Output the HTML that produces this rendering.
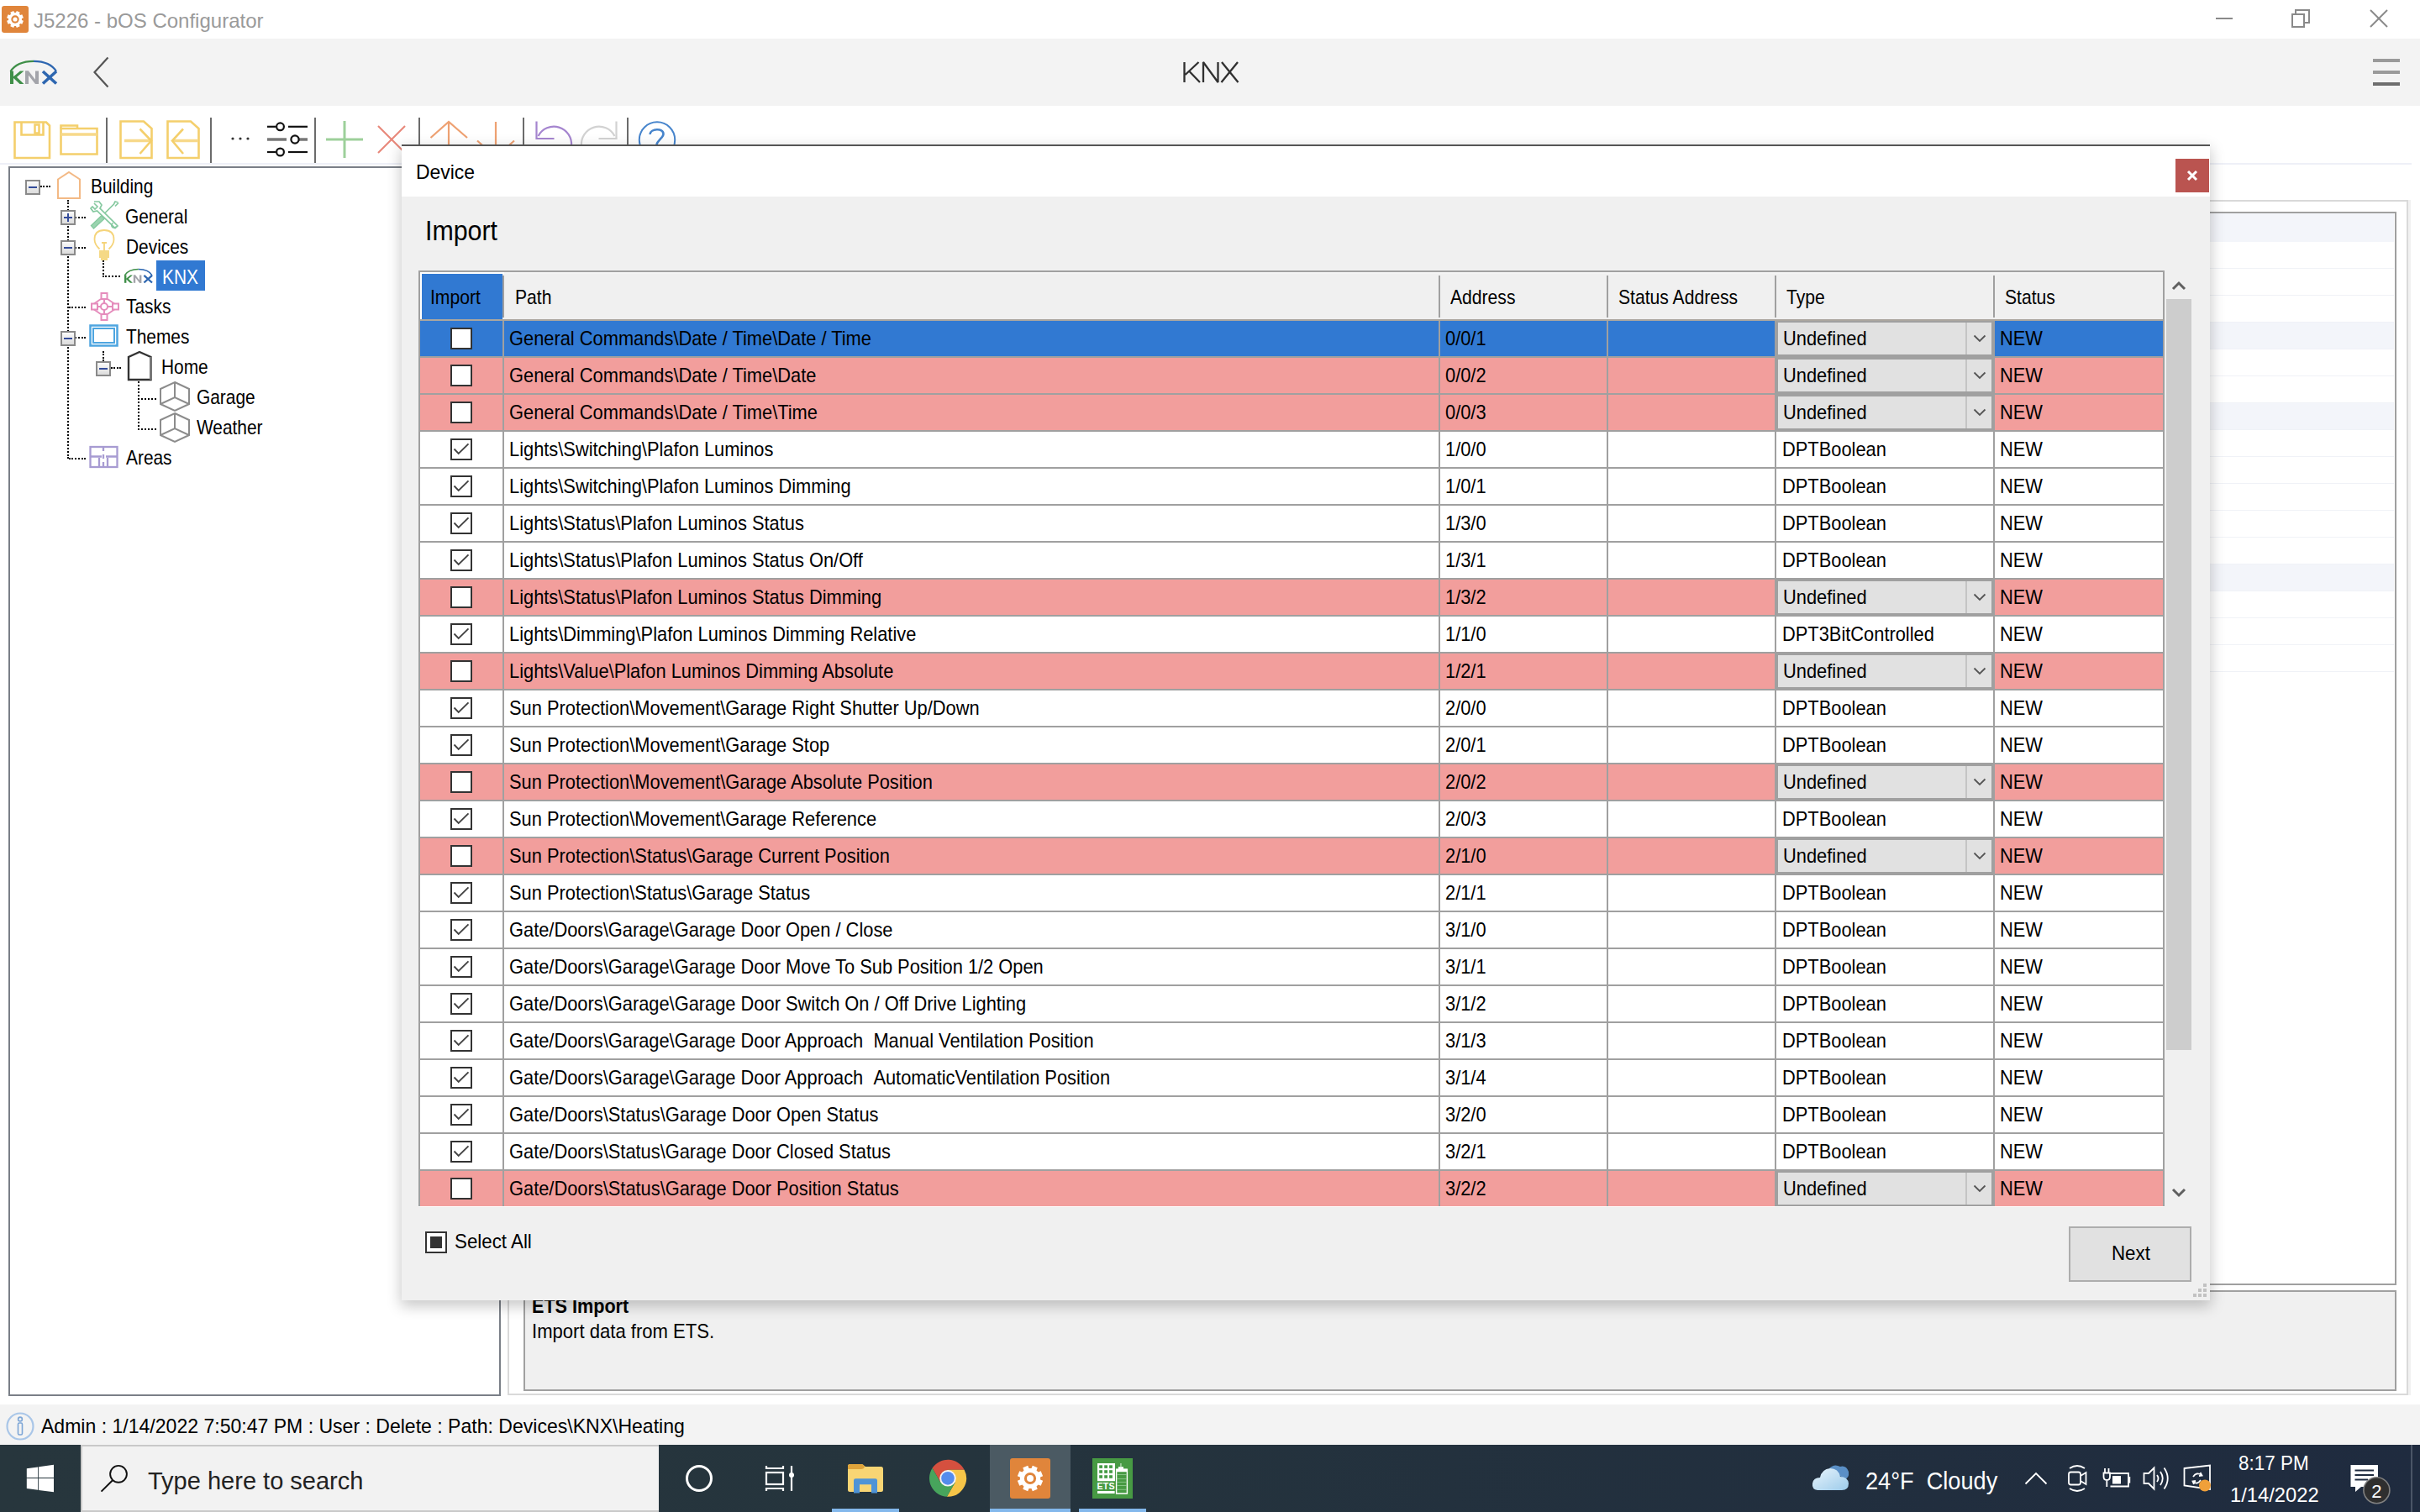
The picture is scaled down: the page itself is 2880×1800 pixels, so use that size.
<!DOCTYPE html>
<html><head><meta charset="utf-8"><style>
html,body{margin:0;padding:0;}
body{width:2880px;height:1800px;overflow:hidden;position:relative;background:#fff;font-family:"Liberation Sans",sans-serif;color:#000;}
.a{position:absolute;}
svg{display:block;}
/* title bar */
#titlebar{position:absolute;left:0;top:0;width:2880px;height:46px;background:#fff;}
#appicon{position:absolute;left:2px;top:7px;width:32px;height:32px;background:#e0853b;border-radius:3px;}
#title{position:absolute;left:40px;top:9px;font-size:24px;line-height:27px;color:#8d8d8d;white-space:nowrap;}
/* header band */
#header{position:absolute;left:0;top:46px;width:2880px;height:80px;background:#f3f3f3;}
#knxtitle{position:absolute;left:1407px;top:66px;font-size:33px;line-height:40px;color:#333;white-space:nowrap;}
/* toolbar */
#toolbar{position:absolute;left:0;top:126px;width:2880px;height:69px;background:#fff;}
.tsep{position:absolute;top:140px;width:2px;height:54px;background:#6b6b6b;}
/* tree */
#tree{position:absolute;left:10px;top:198px;width:582px;height:1460px;border:2px solid #7a7f87;background:#fff;}
.tl{position:absolute;font-size:23px;line-height:26px;letter-spacing:-1px;white-space:nowrap;color:#000;}
.exp{position:absolute;width:14px;height:14px;border:2px solid #8a8a8a;background:linear-gradient(#fafafa,#dcdcdc);}
.exp:after{content:"";position:absolute;left:2px;top:6px;width:10px;height:2px;background:#344c9a;}
.exp.plus:before{content:"";position:absolute;left:6px;top:2px;width:2px;height:10px;background:#344c9a;}
.dv{position:absolute;width:0;border-left:2px dotted #000;}
.dh{position:absolute;height:0;border-top:2px dotted #000;}
/* right panel */
#rpouter{position:absolute;left:604px;top:238px;width:2258px;height:1419px;border:2px solid #d9d9d9;box-shadow:3px 0 0 #f1f1f1;}
#grid{position:absolute;left:623px;top:252px;width:2225px;height:1274px;border:2px solid #a0a0a0;background:#fff;}
#ets{position:absolute;left:623px;top:1536px;width:2225px;height:116px;border:2px solid #a0a0a0;background:#f0f0f0;}
/* status bar */
#status{position:absolute;left:0;top:1672px;width:2880px;height:48px;background:#f3f3f3;}
#stxt{position:absolute;left:49px;top:1684px;font-size:23px;line-height:26px;white-space:nowrap;letter-spacing:-0.3px;}
/* taskbar */
#taskbar{position:absolute;left:0;top:1720px;width:2880px;height:80px;background:linear-gradient(90deg,#27363d 0%,#25343d 40%,#1f2b3f 100%);}
#search{position:absolute;left:96px;top:1720px;width:688px;height:80px;background:#f2f2f2;border:2px solid #c9c9c9;border-right:none;box-sizing:border-box;}
#stext{position:absolute;left:176px;top:1744px;font-size:29px;line-height:34px;color:#222;white-space:nowrap;}
.tbw{position:absolute;color:#fff;white-space:nowrap;}
/* dialog */
#dlgshadow{position:absolute;left:478px;top:172px;width:2152px;height:1376px;box-shadow:0 6px 16px 1px rgba(0,0,0,0.22);}
#dlg{position:absolute;left:478px;top:172px;width:2152px;height:1376px;background:#f0f0f0;border-top:2px solid #555;box-sizing:border-box;}
#dlgtitle{position:absolute;left:478px;top:174px;width:2152px;height:60px;background:#fff;}
#devtxt{position:absolute;left:495px;top:190px;font-size:23px;line-height:27px;white-space:nowrap;}
#closebtn{position:absolute;left:2589px;top:189px;width:40px;height:40px;background:#ba5450;}
#imphead{position:absolute;left:505px;top:256px;font-size:31px;line-height:36px;white-space:nowrap;color:#000;}
#tbl{position:absolute;left:498px;top:322px;width:2078px;height:1115px;background:#fff;overflow:hidden;}
#tblborder{position:absolute;left:498px;top:322px;width:2074px;height:1112px;border:2px solid #a0a0a0;border-bottom:none;}
#thead{position:absolute;left:500px;top:324px;width:2074px;height:56px;background:#f0f0f0;border-top:2px solid #f4f4f4;box-sizing:border-box;}
#theadw{position:absolute;left:500px;top:324px;width:100px;height:56px;border-top:2px solid #fff;border-left:2px solid #fff;box-sizing:border-box;}
#thimp{position:absolute;left:502px;top:326px;width:96px;height:54px;background:#3179d2;}
.th{position:absolute;top:342px;font-size:23px;line-height:26px;letter-spacing:-0.8px;white-space:nowrap;}
.hsepH{position:absolute;top:328px;width:2px;height:50px;background:#a0a0a0;}
#hbot{position:absolute;left:500px;top:380px;width:2074px;height:2px;background:#aba69f;}
.row{position:absolute;left:500px;width:2074px;}
.row .t{position:absolute;top:9px;font-size:23px;line-height:26px;letter-spacing:-0.55px;white-space:nowrap;color:#000;}
.row .tp{left:105px;}
.row .ta{left:1220px;}
.row .tt{left:1620px;}
.row .ts{left:1880px;}
.cb{position:absolute;left:536px;top:8px;width:22px;height:22px;border:2px solid #333;background:#fff;}
.cb svg{position:absolute;left:0;top:0;}
.dd{position:absolute;left:2114px;top:0;width:254px;height:38px;border:2px solid #a0a0a0;background:#e1e1e1;}
.dd .t{left:6px;top:7px;}
.ddb{position:absolute;left:223px;top:0;width:31px;height:38px;border-left:2px solid #c4c4c4;}
.ddb svg{position:absolute;left:7px;top:14px;}
.vsep{position:absolute;top:382px;width:2px;height:1054px;background:#a0a0a0;}
.hsep{position:absolute;left:500px;width:2074px;height:2px;background:#a0a0a0;}
#scroll{position:absolute;left:2578px;top:322px;width:30px;height:1115px;background:#f0f0f0;}
#thumb{position:absolute;left:2578px;top:356px;width:30px;height:894px;background:#cdcdcd;}
#selall{position:absolute;left:506px;top:1466px;width:22px;height:22px;border:2px solid #333;background:#fff;}
#selall:after{content:"";position:absolute;left:4px;top:4px;width:14px;height:14px;background:#333;}
#selalltxt{position:absolute;left:540px;top:1465px;font-size:23px;line-height:26px;letter-spacing:-0.3px;white-space:nowrap;}
#next{position:absolute;left:2462px;top:1460px;width:142px;height:62px;border:2px solid #adadad;background:#e1e1e1;}
#nexttxt{position:absolute;left:2512px;top:1478px;font-size:23px;line-height:26px;white-space:nowrap;}

.tx{position:absolute;line-height:1;white-space:nowrap;}
</style></head><body>
<!-- ============ TITLE BAR ============ -->
<div id="titlebar"></div>
<div id="appicon"><svg width="32" height="32" viewBox="0 0 32 32"><path d="M16.97 8.06 L17.84 6.07 L21.72 7.68 L20.93 9.70 L22.30 11.07 L24.32 10.28 L25.93 14.16 L23.94 15.03 L23.94 16.97 L25.93 17.84 L24.32 21.72 L22.30 20.93 L20.93 22.30 L21.72 24.32 L17.84 25.93 L16.97 23.94 L15.03 23.94 L14.16 25.93 L10.28 24.32 L11.07 22.30 L9.70 20.93 L7.68 21.72 L6.07 17.84 L8.06 16.97 L8.06 15.03 L6.07 14.16 L7.68 10.28 L9.70 11.07 L11.07 9.70 L10.28 7.68 L14.16 6.07 L15.03 8.06 Z" fill="#fff"/><circle cx="16" cy="16" r="4.7" fill="#e0853b"/><circle cx="16" cy="16" r="2.6" fill="#fff"/></svg></div>
<div class="tx" style="left:40px;top:12.60px;font-size:24px;color:#9a9a9a">J5226 - bOS Configurator</div>
<svg class="a" style="left:2630px;top:10px" width="240" height="26" viewBox="0 0 240 26">
 <line x1="7" y1="12" x2="27" y2="12" stroke="#8a8a8a" stroke-width="2"/>
 <rect x="98" y="7" width="14" height="15" fill="none" stroke="#8a8a8a" stroke-width="2"/>
 <path d="M102 6 V2 H118 V17 H113" fill="none" stroke="#8a8a8a" stroke-width="2"/>
 <line x1="191" y1="2" x2="211" y2="22" stroke="#8a8a8a" stroke-width="2"/>
 <line x1="211" y1="2" x2="191" y2="22" stroke="#8a8a8a" stroke-width="2"/>
</svg>

<!-- ============ HEADER ============ -->
<div id="header"></div>
<svg class="a" style="left:0;top:60px" width="140" height="50" viewBox="0 60 140 50">
 <path d="M12.5 85 Q20 73 40 72.8" fill="none" stroke="#3f8f48" stroke-width="2.2"/>
 <path d="M40 72.8 Q60 73 67 85" fill="none" stroke="#2d66b0" stroke-width="2.2"/>
 <g fill="#3f8f48"><rect x="12" y="84.5" width="4" height="15.5"/><path d="M15 92 L24 84.5 H28.5 L18 93.5 Z"/><path d="M18 90 L28.5 100 H23.5 L15.5 92.5 Z"/></g>
 <g fill="#a3a4aa"><rect x="30" y="84.5" width="4" height="15.5"/><rect x="42" y="84.5" width="4" height="15.5"/><path d="M30 84.5 H34 L46 100 H42 Z"/></g>
 <g stroke="#2d66b0" stroke-width="3.6"><line x1="51" y1="85" x2="67" y2="99.5"/><line x1="67" y1="85" x2="51" y2="99.5"/></g>
</svg>
<svg class="a" style="left:110px;top:66px" width="22" height="40" viewBox="0 0 22 40">
 <path d="M18.5 2.5 L2.5 20 L18.5 37.5" fill="none" stroke="#555" stroke-width="2.2"/>
</svg>
<svg class="a" style="left:1400px;top:66px" width="90" height="40" viewBox="1400 66 90 40"><g fill="none" stroke="#303030" stroke-width="2.3" stroke-linejoin="bevel"><path d="M1409.5 74 V98 M1426.5 74 L1410.5 89 M1415 84.5 L1428 98"/><path d="M1432 98 V74 L1449.5 98 V74"/><path d="M1454 74 L1473.5 98 M1473 74 L1453.5 98"/></g></svg>
<svg class="a" style="left:2822px;top:68px" width="36" height="36" viewBox="0 0 36 36">
 <rect x="2" y="2" width="32" height="4" fill="#9a9a9a"/>
 <rect x="2" y="16" width="32" height="4" fill="#9a9a9a"/>
 <rect x="2" y="30" width="32" height="4" fill="#6e6e6e"/>
</svg>

<!-- ============ TOOLBAR ============ -->
<div id="toolbar"></div>
<div class="a" style="left:0;top:194px;width:2870px;height:2px;background:#eef0f7"></div>
<svg class="a" style="left:0;top:126px" width="830" height="70" viewBox="0 126 830 70">
 <g fill="none" stroke-width="2.6">
  <!-- save -->
  <path d="M17.5 188 V145.5 H55 L59 149.5 V188 Z" stroke="#f4cf6c"/>
  <path d="M25.5 145.5 V160.5 H51.5 V145.5" stroke="#f4cf6c"/>
  <rect x="41.5" y="148.5" width="5" height="10" stroke="#f4cf6c" stroke-width="2.5"/>
  <!-- folder -->
  <path d="M72.5 153 V149.5 H92 V153" stroke="#f4cf6c"/>
  <path d="M72.5 153 H115.5 V183.5 H72.5 Z" stroke="#f4cf6c"/>
  <line x1="72.5" y1="160" x2="115.5" y2="160" stroke="#f7d98a" stroke-width="3.5"/>
  <!-- export -->
  <path d="M143.5 188 V144.5 H171 L180.5 153 V188 Z" stroke="#f4cf6c"/>
  <line x1="148" y1="167.5" x2="179" y2="167.5" stroke="#f7d98a" stroke-width="3.5"/>
  <path d="M166.5 153.5 L180 167.5 L166.5 183" stroke="#f4cf6c"/>
  <!-- import -->
  <path d="M199.5 188 V144.5 H227 L236.5 153 V188 Z" stroke="#f4cf6c"/>
  <line x1="205" y1="167.5" x2="236" y2="167.5" stroke="#f7d98a" stroke-width="3.5"/>
  <path d="M218 153.5 L205 167.5 L218 183" stroke="#f4cf6c"/>
 </g>
 <!-- dots -->
 <g fill="#333"><circle cx="277" cy="165" r="1.6"/><circle cx="286" cy="165" r="1.6"/><circle cx="295" cy="165" r="1.6"/></g>
 <!-- sliders -->
 <g stroke="#111" stroke-width="2.2" fill="#fff">
  <line x1="318" y1="150.8" x2="328" y2="150.8"/><line x1="343" y1="150.8" x2="366" y2="150.8"/><circle cx="333.5" cy="150.8" r="4.4"/>
  <line x1="318" y1="181" x2="328" y2="181"/><line x1="343" y1="181" x2="366" y2="181"/><circle cx="333.5" cy="181" r="4.4"/>
  <line x1="318" y1="166" x2="341" y2="166" stroke="#777" stroke-width="3.5"/><line x1="356" y1="166" x2="366" y2="166" stroke="#777" stroke-width="3.5"/><circle cx="351" cy="166" r="4.6"/>
 </g>
 <!-- plus -->
 <g stroke="#9dd09a" stroke-width="3"><line x1="410" y1="144" x2="410" y2="188"/><line x1="388" y1="166" x2="432" y2="166"/></g>
 <!-- x -->
 <g stroke="#e8877a" stroke-width="2.2"><line x1="450" y1="150" x2="482" y2="182"/><line x1="482" y1="150" x2="450" y2="182"/></g>
 <!-- up -->
 <g stroke="#eea172" stroke-width="2.2" fill="none"><line x1="534" y1="145" x2="534" y2="190"/><path d="M512.5 164 L534 145 L556 164"/></g>
 <!-- down -->
 <g stroke="#eea172" stroke-width="2.2" fill="none"><line x1="590" y1="145" x2="590" y2="190"/><path d="M568 167.5 L590 187 L612 167.5"/></g>
 <!-- undo -->
 <g stroke="#a585cf" stroke-width="2.2" fill="none"><path d="M638.5 144.5 V165 H659.5"/><path d="M640.5 162 A21 21 0 0 1 680 174"/></g>
 <!-- redo -->
 <g stroke="#d2d2d2" stroke-width="2.2" fill="none"><path d="M733.5 144.5 V165 H712.5"/><path d="M731.5 162 A21 21 0 0 0 692 174"/></g>
 <!-- help -->
 <g stroke="#4684cc" stroke-width="2" fill="none"><circle cx="782" cy="166.5" r="21.2"/><path d="M773.5 160 C 774 153, 789.5 152, 789.5 159.5 C 789.5 164, 783 166, 781 173" stroke-width="2.6"/></g>
</svg>
<div class="tsep" style="left:126px"></div>
<div class="tsep" style="left:250px"></div>
<div class="tsep" style="left:374px"></div>
<div class="tsep" style="left:498px"></div>
<div class="tsep" style="left:622px"></div>
<div class="tsep" style="left:746px"></div>

<!-- ============ TREE ============ -->
<div id="tree"></div>
<div class="dh" style="left:48px;top:221px;width:12px"></div>
<div class="dv" style="left:80px;top:238px;height:308px"></div>
<div class="dh" style="left:82px;top:258px;width:20px"></div>
<div class="dh" style="left:82px;top:294px;width:20px"></div>
<div class="dh" style="left:82px;top:365px;width:20px"></div>
<div class="dh" style="left:82px;top:401px;width:20px"></div>
<div class="dh" style="left:82px;top:545px;width:20px"></div>
<div class="dv" style="left:122px;top:310px;height:20px"></div>
<div class="dh" style="left:122px;top:328px;width:21px"></div>
<div class="dv" style="left:122px;top:418px;height:12px"></div>
<div class="dh" style="left:132px;top:437px;width:12px"></div>
<div class="dv" style="left:164px;top:454px;height:58px"></div>
<div class="dh" style="left:164px;top:474px;width:22px"></div>
<div class="dh" style="left:164px;top:510px;width:22px"></div>
<div class="exp" style="left:30px;top:214px"></div>
<div class="exp plus" style="left:72px;top:250px"></div>
<div class="exp" style="left:72px;top:286px"></div>
<div class="exp" style="left:72px;top:394px"></div>
<div class="exp" style="left:114px;top:430px"></div>
<div class="a" style="left:186px;top:310px;width:58px;height:36px;background:#3179d2"></div>
<div class="tx" style="left:108px;top:209.60px;font-size:24px;transform:scaleX(0.87);transform-origin:0 0;">Building</div>
<div class="tx" style="left:149px;top:245.60px;font-size:24px;transform:scaleX(0.87);transform-origin:0 0;">General</div>
<div class="tx" style="left:150px;top:281.60px;font-size:24px;transform:scaleX(0.87);transform-origin:0 0;">Devices</div>
<div class="tx" style="left:193px;top:317.60px;font-size:24px;transform:scaleX(0.87);transform-origin:0 0;color:#fff">KNX</div>
<div class="tx" style="left:150px;top:353.10px;font-size:24px;transform:scaleX(0.87);transform-origin:0 0;">Tasks</div>
<div class="tx" style="left:150px;top:389.10px;font-size:24px;transform:scaleX(0.87);transform-origin:0 0;">Themes</div>
<div class="tx" style="left:192px;top:424.60px;font-size:24px;transform:scaleX(0.87);transform-origin:0 0;">Home</div>
<div class="tx" style="left:233.5px;top:460.60px;font-size:24px;transform:scaleX(0.87);transform-origin:0 0;">Garage</div>
<div class="tx" style="left:234px;top:497.00px;font-size:24px;transform:scaleX(0.87);transform-origin:0 0;">Weather</div>
<div class="tx" style="left:150px;top:532.60px;font-size:24px;transform:scaleX(0.87);transform-origin:0 0;">Areas</div>
<svg class="a" style="left:0;top:198px" width="300" height="370" viewBox="0 198 300 370">
 <!-- building house -->
 <path d="M69 236 V213.5 L82 205 L95 213.5 V236 Z" fill="none" stroke="#f3b985" stroke-width="2"/>
 <!-- general tools -->
 <g fill="none" stroke="#86c9a0" stroke-width="1.7">
  <path d="M112 240 H118 L121 244 L119 248 L140 269 L137 271.5 L115.5 251 L111 252 L108 248 L110 246 L113 249 L116 246 L112 242"/>
  <path d="M134.5 265.5 a3 3 0 1 0 4 4"/>
  <path d="M140.5 241 L137 240 L135.5 243 L125 253.5"/>
  <path d="M141 241.5 L137 245.5"/>
 </g>
 <path d="M120.5 257 L108.5 268.5 L111.5 272 L124 260.5 Z" fill="#9ad4b0" stroke="#86c9a0" stroke-width="1.4"/>
 <!-- bulb -->
 <g fill="none" stroke="#f5d47a" stroke-width="1.8">
  <path d="M118.5 296.5 Q112.5 291 112.5 285 Q112.5 274 124 274 Q135.5 274 135.5 285 Q135.5 291 129.5 296.5"/>
  <path d="M121 289 H127 M124 290 V298"/>
 </g>
 <rect x="118" y="298" width="12" height="9" fill="#f5d986"/>
 <rect x="120" y="307" width="8" height="3" fill="#f5d986"/>
 <!-- small knx -->
 <g transform="translate(148 320) scale(0.6) translate(-12 -72)">
  <path d="M12.5 85 Q20 73 40 72.8" fill="none" stroke="#3f8f48" stroke-width="2.6"/>
  <path d="M40 72.8 Q60 73 67 85" fill="none" stroke="#2d66b0" stroke-width="2.6"/>
  <g fill="#3f8f48"><rect x="12" y="84.5" width="4" height="15.5"/><path d="M15 92 L24 84.5 H28.5 L18 93.5 Z"/><path d="M18 90 L28.5 100 H23.5 L15.5 92.5 Z"/></g>
  <g fill="#a3a4aa"><rect x="30" y="84.5" width="4" height="15.5"/><rect x="42" y="84.5" width="4" height="15.5"/><path d="M30 84.5 H34 L46 100 H42 Z"/></g>
  <g stroke="#2d66b0" stroke-width="3.8"><line x1="51" y1="85" x2="67" y2="99.5"/><line x1="67" y1="85" x2="51" y2="99.5"/></g>
 </g>
 <!-- tasks -->
 <g fill="none" stroke="#e58cbc" stroke-width="2">
  <rect x="120.5" y="349" width="7" height="7"/>
  <rect x="120.5" y="374" width="7" height="7"/>
  <rect x="109" y="361.5" width="7" height="7"/>
  <rect x="134" y="361.5" width="7" height="7"/>
  <circle cx="124" cy="365" r="4"/>
  <path d="M120 356 L112 361.5 M128 356 L136 361.5 M112 368.5 L120 374 M136 368.5 L128 374 M116 365 H120 M128 365 H134 M124 356 V361 M124 369 V374"/>
 </g>
 <!-- themes -->
 <rect x="107.5" y="387.5" width="32" height="24" fill="none" stroke="#4ea5e0" stroke-width="2.5"/>
 <rect x="111" y="391" width="25" height="17" fill="none" stroke="#4ea5e0" stroke-width="2"/>
 <!-- home (black house) -->
 <path d="M153 452 V425 L166 419 L179.5 425 V452 Z" fill="none" stroke="#333" stroke-width="2.4"/>
 <path d="M179.5 425 V452" stroke="#777" stroke-width="3"/>
 <!-- cubes -->
 <g fill="none" stroke="#8c8c8c" stroke-width="2">
  <path d="M208 455 L225 463 V481 L208 489 L191 481 V463 Z M208 455 V473 M191 481 L208 473 L225 481"/>
  <path d="M208 492 L225 500 V518 L208 526 L191 518 V500 Z M208 492 V510 M191 518 L208 510 L225 518"/>
 </g>
 <!-- areas -->
 <g fill="none" stroke="#a79bd2" stroke-width="2.3">
  <rect x="107.5" y="532" width="32" height="24"/>
  <path d="M107.5 543.5 H121 M126 543.5 H139.5 M123 532 V537 M123 541 V546 M123 550 V556 M118 545 V556 M128 545 V556"/>
 </g>
</svg>


<!-- ============ RIGHT PANEL ============ -->
<div id="rpouter"></div>
<div id="grid"></div>
<div class="a" style="left:625px;top:254px;width:2224px;height:34px;background:#f3f5fa"></div>
<div class="a" style="left:625px;top:319px;width:2224px;height:1px;background:#f0f2f7"></div>
<div class="a" style="left:625px;top:351px;width:2224px;height:1px;background:#f0f2f7"></div>
<div class="a" style="left:625px;top:383px;width:2224px;height:1px;background:#f0f2f7"></div>
<div class="a" style="left:625px;top:384px;width:2224px;height:32px;background:#f3f5fa"></div>
<div class="a" style="left:625px;top:415px;width:2224px;height:1px;background:#f0f2f7"></div>
<div class="a" style="left:625px;top:447px;width:2224px;height:1px;background:#f0f2f7"></div>
<div class="a" style="left:625px;top:479px;width:2224px;height:1px;background:#f0f2f7"></div>
<div class="a" style="left:625px;top:480px;width:2224px;height:32px;background:#f3f5fa"></div>
<div class="a" style="left:625px;top:511px;width:2224px;height:1px;background:#f0f2f7"></div>
<div class="a" style="left:625px;top:543px;width:2224px;height:1px;background:#f0f2f7"></div>
<div class="a" style="left:625px;top:575px;width:2224px;height:1px;background:#f0f2f7"></div>
<div class="a" style="left:625px;top:607px;width:2224px;height:1px;background:#f0f2f7"></div>
<div class="a" style="left:625px;top:639px;width:2224px;height:1px;background:#f0f2f7"></div>
<div class="a" style="left:625px;top:671px;width:2224px;height:1px;background:#f0f2f7"></div>
<div class="a" style="left:625px;top:672px;width:2224px;height:32px;background:#f3f5fa"></div>
<div class="a" style="left:625px;top:703px;width:2224px;height:1px;background:#f0f2f7"></div>
<div class="a" style="left:625px;top:735px;width:2224px;height:1px;background:#f0f2f7"></div>
<div class="a" style="left:625px;top:767px;width:2224px;height:1px;background:#f0f2f7"></div>
<div class="a" style="left:625px;top:799px;width:2224px;height:1px;background:#f0f2f7"></div>
<div id="ets"></div>
<div class="tx" style="left:633px;top:1543.10px;font-size:24px;transform:scaleX(0.9);transform-origin:0 0;font-weight:bold">ETS Import</div>
<div class="tx" style="left:633px;top:1572.60px;font-size:24px;transform:scaleX(0.92);transform-origin:0 0;">Import data from ETS.</div>

<!-- ============ STATUS BAR ============ -->
<div id="status"></div>
<svg class="a" style="left:6px;top:1680px" width="36" height="36" viewBox="0 0 36 36">
 <circle cx="18" cy="18" r="15.5" fill="none" stroke="#a9c6e8" stroke-width="2.2"/>
 <circle cx="18" cy="9.5" r="2.4" fill="none" stroke="#7da6d6" stroke-width="1.6"/>
 <rect x="15.5" y="14" width="5" height="14" rx="1.5" fill="none" stroke="#7da6d6" stroke-width="1.6"/>
</svg>
<div class="tx" style="left:49px;top:1685.60px;font-size:24px;transform:scaleX(0.96);transform-origin:0 0;">Admin : 1/14/2022 7:50:47 PM : User : Delete : Path: Devices\KNX\Heating</div>

<!-- ============ TASKBAR ============ -->
<div id="taskbar"></div>
<svg class="a" style="left:25px;top:1738px" width="45" height="45" viewBox="25 1738 45 45"><path d="M31.8 1748.2 L45.2 1746.4 V1758.9 H31.8 Z M46.1 1746.2 L64 1743.8 V1758.9 H46.1 Z M31.8 1760.1 H45.2 V1773.8 L31.8 1772 Z M46.1 1760.1 H64 V1776.2 L46.1 1774 Z" fill="#fff"/></svg>
<div id="search"></div>
<svg class="a" style="left:112px;top:1738px" width="45" height="45" viewBox="112 1738 45 45"><circle cx="141" cy="1754.8" r="9.9" fill="none" stroke="#111" stroke-width="1.9"/><line x1="134" y1="1762.2" x2="120.5" y2="1775.6" stroke="#111" stroke-width="2"/></svg>
<div class="tx" style="left:176px;top:1747.50px;font-size:30px;transform:scaleX(0.967);transform-origin:0 0;color:#222">Type here to search</div>
<svg class="a" style="left:812px;top:1740px" width="40" height="40" viewBox="0 0 40 40"><circle cx="20" cy="20" r="14.5" fill="none" stroke="#fff" stroke-width="3"/></svg>
<svg class="a" style="left:909px;top:1743px" width="38" height="34" viewBox="0 0 38 34">
 <path d="M3 2 V5 H23 V2 M3 32 V29 H23 V32" fill="none" stroke="#fff" stroke-width="2.2"/>
 <rect x="3" y="10" width="20" height="14" fill="none" stroke="#fff" stroke-width="2.2"/>
 <line x1="33" y1="2" x2="33" y2="32" stroke="#fff" stroke-width="2.2"/>
 <circle cx="33" cy="13" r="3" fill="#fff"/>
</svg>
<!-- file explorer -->
<svg class="a" style="left:1005px;top:1740px" width="50" height="40" viewBox="1005 1740 50 40">
 <path d="M1009 1745.5 Q1009 1743 1011.5 1743 H1025 Q1027 1743 1028.5 1745 L1030 1746 H1049 Q1051 1746 1051 1748.5 V1773.5 Q1051 1776 1048.5 1776 H1011.5 Q1009 1776 1009 1773.5 Z" fill="#f8d574"/>
 <path d="M1009 1749 V1745.5 Q1009 1743 1011.5 1743 H1025 Q1027 1743 1028.5 1745 L1029 1746.5 Q1027.5 1749 1025 1749 Z" fill="#dea33a"/>
 <path d="M1016 1777.5 V1762.5 Q1016 1760.3 1018.2 1760.3 H1041.8 Q1044 1760.3 1044 1762.5 V1777.5 H1037 V1767.2 H1023 V1777.5 Z" fill="#4f93d6"/>
</svg>
<div class="a" style="left:990px;top:1796px;width:80px;height:4px;background:#83b8ec"></div>
<!-- chrome -->
<svg class="a" style="left:1105px;top:1737px" width="46" height="46" viewBox="-23 -22.8 46 46">
 <path d="M-18.46 -11.96 A22.0 22.0 0 0 1 19.59 -10.01 L-0.00 -10.01 L0 0 L-8.67 5.01 Z" fill="#d5503f"/>
 <path d="M19.59 -10.01 A22.0 22.0 0 0 1 -1.13 21.97 L8.67 5.00 L0 0 L0.00 -10.01 Z" fill="#f6c548"/>
 <path d="M-1.13 21.97 A22.0 22.0 0 0 1 -18.46 -11.96 L-8.67 5.01 L0 0 L8.67 5.00 Z" fill="#47a45c"/>
 <circle r="9.77" fill="#f4f4f4"/><circle r="7.83" fill="#548ced"/>
</svg>
<!-- bOS active -->
<div class="a" style="left:1178px;top:1720px;width:96px;height:80px;background:#4b5a63"></div>
<div class="a" style="left:1178px;top:1796px;width:96px;height:4px;background:#83b8ec"></div>
<div class="a" style="left:1202px;top:1736px;width:48px;height:48px;background:#e0853b;border-radius:3px"></div>
<svg class="a" style="left:1202px;top:1736px" width="48" height="48" viewBox="-24 -24 48 48"><path d="M1.49 -12.11 L2.81 -15.14 L8.72 -12.69 L7.51 -9.61 L9.61 -7.51 L12.69 -8.72 L15.14 -2.81 L12.11 -1.49 L12.11 1.49 L15.14 2.81 L12.69 8.72 L9.61 7.51 L7.51 9.61 L8.72 12.69 L2.81 15.14 L1.49 12.11 L-1.49 12.11 L-2.81 15.14 L-8.72 12.69 L-7.51 9.61 L-9.61 7.51 L-12.69 8.72 L-15.14 2.81 L-12.11 1.49 L-12.11 -1.49 L-15.14 -2.81 L-12.69 -8.72 L-9.61 -7.51 L-7.51 -9.61 L-8.72 -12.69 L-2.81 -15.14 L-1.49 -12.11 Z" fill="#fff"/><circle r="7.1" fill="#e0853b"/><circle r="4" fill="#fff"/></svg>
<!-- ETS -->
<div class="a" style="left:1300px;top:1736px;width:48px;height:48px;background:#479a43"></div>
<svg class="a" style="left:1300px;top:1736px" width="48" height="48" viewBox="0 0 48 48">
 <rect x="6" y="6" width="21" height="21.2" fill="#fff"/>
 <g fill="#449b44"><rect x="8.2" y="8.3" width="3.8" height="3.6"/><rect x="14.2" y="8.3" width="3.8" height="3.6"/><rect x="20.1" y="8.3" width="3.8" height="3.6"/><rect x="8.2" y="14.2" width="3.8" height="3.6"/><rect x="14.2" y="14.2" width="3.8" height="3.6"/><rect x="20.1" y="14.2" width="3.8" height="3.6"/><rect x="8.2" y="20.2" width="3.8" height="3.6"/><rect x="14.2" y="20.2" width="3.8" height="3.6"/><rect x="20.1" y="20.2" width="3.8" height="3.6"/></g>
 <text x="5.6" y="37" font-family="Liberation Sans" font-weight="bold" font-size="10.6" fill="#fff" textLength="21">ETS</text>
 <rect x="6" y="39" width="20.6" height="3" fill="#fff"/>
 <path d="M28.6 42 V13.3 H41.4 V42 Z" fill="none" stroke="#fff" stroke-width="1.4"/>
 <rect x="28.6" y="12.8" width="12.8" height="3.4" fill="#fff"/>
 <rect x="30.9" y="10.2" width="6.1" height="3" fill="#fff"/>
 <rect x="33.4" y="6" width="1.1" height="4.5" fill="#cfe8cf"/>
 <g stroke="#8cc78c" stroke-width="0.9"><line x1="29" y1="19.5" x2="41" y2="19.5"/><line x1="29" y1="24.6" x2="41" y2="24.6"/><line x1="29" y1="28.4" x2="41" y2="28.4"/><line x1="29" y1="32.5" x2="41" y2="32.5"/><line x1="29" y1="37.3" x2="41" y2="37.3"/></g>
</svg>
<div class="a" style="left:1284px;top:1796px;width:80px;height:4px;background:#83b8ec"></div>
<!-- tray -->
<svg class="a" style="left:2155px;top:1740px" width="48" height="36" viewBox="0 0 48 36">
 <defs><linearGradient id="cl" x1="0" y1="0" x2="1" y2="1"><stop offset="0" stop-color="#e8f4fc"/><stop offset="1" stop-color="#9ccbea"/></linearGradient></defs>
 <path d="M22 8 Q28 2 35 6 Q42 4 45 12 Q46 20 40 21 Z" fill="#5a8fc6"/>
 <path d="M8 34 Q1 33 2 26 Q3 19 11 19 Q13 9 23 8 Q33 8 35 18 Q44 18 45 26 Q45 34 37 34 Z" fill="url(#cl)"/>
</svg>
<div class="tx" style="left:2220px;top:1747.50px;font-size:30px;transform:scaleX(0.905);transform-origin:0 0;color:#fff">24°F&nbsp; Cloudy</div>
<svg class="a" style="left:2400px;top:1725px" width="250" height="75" viewBox="2400 1725 250 75">
 <path d="M2410.5 1766.5 L2423 1754 L2435.5 1766.5" fill="none" stroke="#fff" stroke-width="1.8"/>
 <g fill="none" stroke="#fff" stroke-width="1.8">
  <path d="M2463 1748 Q2472 1742 2481 1748 M2463 1772 Q2472 1778 2481 1772"/>
  <rect x="2462" y="1752.5" width="14" height="15" rx="2.5"/>
  <path d="M2476 1757 L2482.5 1753 V1767 L2476 1763"/>
 </g>
 <g fill="none" stroke="#fff" stroke-width="1.8">
  <path d="M2505 1748 V1753 M2509.5 1748 V1753 M2503.5 1753.5 H2511 V1758 Q2511 1762 2507.3 1762 Q2503.5 1762 2503.5 1758 Z M2507.3 1762 V1770"/>
  <path d="M2511.5 1754 H2533 V1769.5 H2511.5"/>
  <path d="M2534 1758 V1765.5" stroke-width="2.5"/>
 </g>
 <rect x="2514" y="1757" width="10" height="9.5" fill="#fff"/>
 <g fill="none" stroke="#fff" stroke-width="1.8">
  <path d="M2551.5 1754 H2557 L2563.5 1747.5 V1772.5 L2557 1766 H2551.5 Z"/>
  <path d="M2567 1756 Q2570 1760 2567 1764 M2571 1752 Q2576.5 1760 2571 1768 M2575.5 1747.5 Q2584 1760 2575.5 1772.5"/>
 </g>
 <g fill="none" stroke="#fff" stroke-width="1.8">
  <path d="M2599.5 1748 L2630 1744.5 V1773 L2599.5 1768.5 Z"/>
  <path d="M2610 1758 Q2614 1752 2620 1756 M2619 1762 Q2615 1768 2610 1764 M2618.5 1753 L2620.5 1756.5 L2617 1757 M2611 1767 L2609.5 1763.5 L2613 1763"/>
 </g>
 <circle cx="2624" cy="1768.5" r="7" fill="#f0a03a"/>
</svg>
<div class="tx" style="left:2664px;top:1730.10px;font-size:24px;transform:scaleX(0.935);transform-origin:0 0;color:#fff">8:17 PM</div>
<div class="tx" style="left:2654px;top:1767.60px;font-size:24px;transform:scaleX(0.99);transform-origin:0 0;color:#fff">1/14/2022</div>
<svg class="a" style="left:2790px;top:1735px" width="60" height="60" viewBox="2790 1735 60 60">
 <path d="M2797.5 1744 H2830 V1770 H2810 L2803 1776 V1770 H2797.5 Z" fill="#fff"/>
 <g stroke="#1f2b3f" stroke-width="2"><line x1="2802.5" y1="1750.5" x2="2825" y2="1750.5"/><line x1="2802.5" y1="1756" x2="2825" y2="1756"/><line x1="2802.5" y1="1761.5" x2="2818" y2="1761.5"/></g>
 <circle cx="2828.4" cy="1774.2" r="15.5" fill="#2f2f2f" stroke="#808080" stroke-width="1.6"/>
 <text x="2828.4" y="1782.5" text-anchor="middle" font-family="Liberation Sans" font-size="22" fill="#fff">2</text>
</svg>
<div class="a" style="left:2869px;top:1720px;width:2px;height:80px;background:#4a5566"></div>

<!-- ============ DIALOG ============ -->
<div id="dlgshadow"></div>
<div id="dlg"></div>
<div id="dlgtitle"></div>
<div class="tx" style="left:495px;top:192.60px;font-size:24px;transform:scaleX(0.955);transform-origin:0 0;">Device</div>
<div id="closebtn"><svg width="40" height="40" viewBox="0 0 40 40"><g stroke="#fff" stroke-width="3"><line x1="15" y1="15" x2="25" y2="25"/><line x1="25" y1="15" x2="15" y2="25"/></g></svg></div>
<div class="tx" style="left:506px;top:258.45px;font-size:33px;transform:scaleX(0.92);transform-origin:0 0;">Import</div>
<div id="tbl"></div>
<div id="thead"></div>
<div id="theadw"></div>
<div id="thimp"></div>
<div class="tx" style="left:512px;top:341.60px;font-size:24px;transform:scaleX(0.88);transform-origin:0 0;">Import</div>
<div class="tx" style="left:613px;top:341.60px;font-size:24px;transform:scaleX(0.88);transform-origin:0 0;">Path</div>
<div class="tx" style="left:1726px;top:341.60px;font-size:24px;transform:scaleX(0.88);transform-origin:0 0;">Address</div>
<div class="tx" style="left:1926px;top:341.60px;font-size:24px;transform:scaleX(0.88);transform-origin:0 0;">Status Address</div>
<div class="tx" style="left:2126px;top:341.60px;font-size:24px;transform:scaleX(0.88);transform-origin:0 0;">Type</div>
<div class="tx" style="left:2386px;top:341.60px;font-size:24px;transform:scaleX(0.88);transform-origin:0 0;">Status</div>
<div class="hsepH" style="left:598px"></div>
<div class="hsepH" style="left:1712px"></div>
<div class="hsepH" style="left:1912px"></div>
<div class="hsepH" style="left:2112px"></div>
<div class="hsepH" style="left:2372px"></div>
<div id="hbot"></div>
<div class="row" style="top:382px;height:42px;background:#3179d2"></div>
<div class="cb" style="top:390px"></div>
<div class="tx" style="left:606px;top:391.30px;font-size:24px;transform:scaleX(0.91);transform-origin:0 0;">General Commands\Date / Time\Date / Time</div>
<div class="tx" style="left:1720px;top:391.30px;font-size:24px;transform:scaleX(0.91);transform-origin:0 0;">0/0/1</div>
<div class="dd" style="top:382px"><div class="ddb"><svg width="16" height="10" viewBox="0 0 16 10"><path d="M1.5 1.5 L8 8 L14.5 1.5" stroke="#555" stroke-width="1.8" fill="none"/></svg></div></div>
<div class="tx" style="left:2122px;top:391.30px;font-size:24px;transform:scaleX(0.91);transform-origin:0 0;">Undefined</div>
<div class="tx" style="left:2380px;top:391.30px;font-size:24px;transform:scaleX(0.91);transform-origin:0 0;">NEW</div>
<div class="row" style="top:426px;height:42px;background:#f29e9c"></div>
<div class="cb" style="top:434px"></div>
<div class="tx" style="left:606px;top:435.30px;font-size:24px;transform:scaleX(0.91);transform-origin:0 0;">General Commands\Date / Time\Date</div>
<div class="tx" style="left:1720px;top:435.30px;font-size:24px;transform:scaleX(0.91);transform-origin:0 0;">0/0/2</div>
<div class="dd" style="top:426px"><div class="ddb"><svg width="16" height="10" viewBox="0 0 16 10"><path d="M1.5 1.5 L8 8 L14.5 1.5" stroke="#555" stroke-width="1.8" fill="none"/></svg></div></div>
<div class="tx" style="left:2122px;top:435.30px;font-size:24px;transform:scaleX(0.91);transform-origin:0 0;">Undefined</div>
<div class="tx" style="left:2380px;top:435.30px;font-size:24px;transform:scaleX(0.91);transform-origin:0 0;">NEW</div>
<div class="row" style="top:470px;height:42px;background:#f29e9c"></div>
<div class="cb" style="top:478px"></div>
<div class="tx" style="left:606px;top:479.30px;font-size:24px;transform:scaleX(0.91);transform-origin:0 0;">General Commands\Date / Time\Time</div>
<div class="tx" style="left:1720px;top:479.30px;font-size:24px;transform:scaleX(0.91);transform-origin:0 0;">0/0/3</div>
<div class="dd" style="top:470px"><div class="ddb"><svg width="16" height="10" viewBox="0 0 16 10"><path d="M1.5 1.5 L8 8 L14.5 1.5" stroke="#555" stroke-width="1.8" fill="none"/></svg></div></div>
<div class="tx" style="left:2122px;top:479.30px;font-size:24px;transform:scaleX(0.91);transform-origin:0 0;">Undefined</div>
<div class="tx" style="left:2380px;top:479.30px;font-size:24px;transform:scaleX(0.91);transform-origin:0 0;">NEW</div>
<div class="row" style="top:514px;height:42px;background:#fff"></div>
<div class="cb" style="top:522px"><svg width="22" height="22" viewBox="0 0 22 22"><path d="M2.5 10.5 L7.7 16 L19.5 4.3" stroke="#444" stroke-width="1.9" fill="none"/></svg></div>
<div class="tx" style="left:606px;top:523.30px;font-size:24px;transform:scaleX(0.91);transform-origin:0 0;">Lights\Switching\Plafon Luminos</div>
<div class="tx" style="left:1720px;top:523.30px;font-size:24px;transform:scaleX(0.91);transform-origin:0 0;">1/0/0</div>
<div class="tx" style="left:2121px;top:523.30px;font-size:24px;transform:scaleX(0.91);transform-origin:0 0;">DPTBoolean</div>
<div class="tx" style="left:2380px;top:523.30px;font-size:24px;transform:scaleX(0.91);transform-origin:0 0;">NEW</div>
<div class="row" style="top:558px;height:42px;background:#fff"></div>
<div class="cb" style="top:566px"><svg width="22" height="22" viewBox="0 0 22 22"><path d="M2.5 10.5 L7.7 16 L19.5 4.3" stroke="#444" stroke-width="1.9" fill="none"/></svg></div>
<div class="tx" style="left:606px;top:567.30px;font-size:24px;transform:scaleX(0.91);transform-origin:0 0;">Lights\Switching\Plafon Luminos Dimming</div>
<div class="tx" style="left:1720px;top:567.30px;font-size:24px;transform:scaleX(0.91);transform-origin:0 0;">1/0/1</div>
<div class="tx" style="left:2121px;top:567.30px;font-size:24px;transform:scaleX(0.91);transform-origin:0 0;">DPTBoolean</div>
<div class="tx" style="left:2380px;top:567.30px;font-size:24px;transform:scaleX(0.91);transform-origin:0 0;">NEW</div>
<div class="row" style="top:602px;height:42px;background:#fff"></div>
<div class="cb" style="top:610px"><svg width="22" height="22" viewBox="0 0 22 22"><path d="M2.5 10.5 L7.7 16 L19.5 4.3" stroke="#444" stroke-width="1.9" fill="none"/></svg></div>
<div class="tx" style="left:606px;top:611.30px;font-size:24px;transform:scaleX(0.91);transform-origin:0 0;">Lights\Status\Plafon Luminos Status</div>
<div class="tx" style="left:1720px;top:611.30px;font-size:24px;transform:scaleX(0.91);transform-origin:0 0;">1/3/0</div>
<div class="tx" style="left:2121px;top:611.30px;font-size:24px;transform:scaleX(0.91);transform-origin:0 0;">DPTBoolean</div>
<div class="tx" style="left:2380px;top:611.30px;font-size:24px;transform:scaleX(0.91);transform-origin:0 0;">NEW</div>
<div class="row" style="top:646px;height:42px;background:#fff"></div>
<div class="cb" style="top:654px"><svg width="22" height="22" viewBox="0 0 22 22"><path d="M2.5 10.5 L7.7 16 L19.5 4.3" stroke="#444" stroke-width="1.9" fill="none"/></svg></div>
<div class="tx" style="left:606px;top:655.30px;font-size:24px;transform:scaleX(0.91);transform-origin:0 0;">Lights\Status\Plafon Luminos Status On/Off</div>
<div class="tx" style="left:1720px;top:655.30px;font-size:24px;transform:scaleX(0.91);transform-origin:0 0;">1/3/1</div>
<div class="tx" style="left:2121px;top:655.30px;font-size:24px;transform:scaleX(0.91);transform-origin:0 0;">DPTBoolean</div>
<div class="tx" style="left:2380px;top:655.30px;font-size:24px;transform:scaleX(0.91);transform-origin:0 0;">NEW</div>
<div class="row" style="top:690px;height:42px;background:#f29e9c"></div>
<div class="cb" style="top:698px"></div>
<div class="tx" style="left:606px;top:699.30px;font-size:24px;transform:scaleX(0.91);transform-origin:0 0;">Lights\Status\Plafon Luminos Status Dimming</div>
<div class="tx" style="left:1720px;top:699.30px;font-size:24px;transform:scaleX(0.91);transform-origin:0 0;">1/3/2</div>
<div class="dd" style="top:690px"><div class="ddb"><svg width="16" height="10" viewBox="0 0 16 10"><path d="M1.5 1.5 L8 8 L14.5 1.5" stroke="#555" stroke-width="1.8" fill="none"/></svg></div></div>
<div class="tx" style="left:2122px;top:699.30px;font-size:24px;transform:scaleX(0.91);transform-origin:0 0;">Undefined</div>
<div class="tx" style="left:2380px;top:699.30px;font-size:24px;transform:scaleX(0.91);transform-origin:0 0;">NEW</div>
<div class="row" style="top:734px;height:42px;background:#fff"></div>
<div class="cb" style="top:742px"><svg width="22" height="22" viewBox="0 0 22 22"><path d="M2.5 10.5 L7.7 16 L19.5 4.3" stroke="#444" stroke-width="1.9" fill="none"/></svg></div>
<div class="tx" style="left:606px;top:743.30px;font-size:24px;transform:scaleX(0.91);transform-origin:0 0;">Lights\Dimming\Plafon Luminos Dimming Relative</div>
<div class="tx" style="left:1720px;top:743.30px;font-size:24px;transform:scaleX(0.91);transform-origin:0 0;">1/1/0</div>
<div class="tx" style="left:2121px;top:743.30px;font-size:24px;transform:scaleX(0.91);transform-origin:0 0;">DPT3BitControlled</div>
<div class="tx" style="left:2380px;top:743.30px;font-size:24px;transform:scaleX(0.91);transform-origin:0 0;">NEW</div>
<div class="row" style="top:778px;height:42px;background:#f29e9c"></div>
<div class="cb" style="top:786px"></div>
<div class="tx" style="left:606px;top:787.30px;font-size:24px;transform:scaleX(0.91);transform-origin:0 0;">Lights\Value\Plafon Luminos Dimming Absolute</div>
<div class="tx" style="left:1720px;top:787.30px;font-size:24px;transform:scaleX(0.91);transform-origin:0 0;">1/2/1</div>
<div class="dd" style="top:778px"><div class="ddb"><svg width="16" height="10" viewBox="0 0 16 10"><path d="M1.5 1.5 L8 8 L14.5 1.5" stroke="#555" stroke-width="1.8" fill="none"/></svg></div></div>
<div class="tx" style="left:2122px;top:787.30px;font-size:24px;transform:scaleX(0.91);transform-origin:0 0;">Undefined</div>
<div class="tx" style="left:2380px;top:787.30px;font-size:24px;transform:scaleX(0.91);transform-origin:0 0;">NEW</div>
<div class="row" style="top:822px;height:42px;background:#fff"></div>
<div class="cb" style="top:830px"><svg width="22" height="22" viewBox="0 0 22 22"><path d="M2.5 10.5 L7.7 16 L19.5 4.3" stroke="#444" stroke-width="1.9" fill="none"/></svg></div>
<div class="tx" style="left:606px;top:831.30px;font-size:24px;transform:scaleX(0.91);transform-origin:0 0;">Sun Protection\Movement\Garage Right Shutter Up/Down</div>
<div class="tx" style="left:1720px;top:831.30px;font-size:24px;transform:scaleX(0.91);transform-origin:0 0;">2/0/0</div>
<div class="tx" style="left:2121px;top:831.30px;font-size:24px;transform:scaleX(0.91);transform-origin:0 0;">DPTBoolean</div>
<div class="tx" style="left:2380px;top:831.30px;font-size:24px;transform:scaleX(0.91);transform-origin:0 0;">NEW</div>
<div class="row" style="top:866px;height:42px;background:#fff"></div>
<div class="cb" style="top:874px"><svg width="22" height="22" viewBox="0 0 22 22"><path d="M2.5 10.5 L7.7 16 L19.5 4.3" stroke="#444" stroke-width="1.9" fill="none"/></svg></div>
<div class="tx" style="left:606px;top:875.30px;font-size:24px;transform:scaleX(0.91);transform-origin:0 0;">Sun Protection\Movement\Garage Stop</div>
<div class="tx" style="left:1720px;top:875.30px;font-size:24px;transform:scaleX(0.91);transform-origin:0 0;">2/0/1</div>
<div class="tx" style="left:2121px;top:875.30px;font-size:24px;transform:scaleX(0.91);transform-origin:0 0;">DPTBoolean</div>
<div class="tx" style="left:2380px;top:875.30px;font-size:24px;transform:scaleX(0.91);transform-origin:0 0;">NEW</div>
<div class="row" style="top:910px;height:42px;background:#f29e9c"></div>
<div class="cb" style="top:918px"></div>
<div class="tx" style="left:606px;top:919.30px;font-size:24px;transform:scaleX(0.91);transform-origin:0 0;">Sun Protection\Movement\Garage Absolute Position</div>
<div class="tx" style="left:1720px;top:919.30px;font-size:24px;transform:scaleX(0.91);transform-origin:0 0;">2/0/2</div>
<div class="dd" style="top:910px"><div class="ddb"><svg width="16" height="10" viewBox="0 0 16 10"><path d="M1.5 1.5 L8 8 L14.5 1.5" stroke="#555" stroke-width="1.8" fill="none"/></svg></div></div>
<div class="tx" style="left:2122px;top:919.30px;font-size:24px;transform:scaleX(0.91);transform-origin:0 0;">Undefined</div>
<div class="tx" style="left:2380px;top:919.30px;font-size:24px;transform:scaleX(0.91);transform-origin:0 0;">NEW</div>
<div class="row" style="top:954px;height:42px;background:#fff"></div>
<div class="cb" style="top:962px"><svg width="22" height="22" viewBox="0 0 22 22"><path d="M2.5 10.5 L7.7 16 L19.5 4.3" stroke="#444" stroke-width="1.9" fill="none"/></svg></div>
<div class="tx" style="left:606px;top:963.30px;font-size:24px;transform:scaleX(0.91);transform-origin:0 0;">Sun Protection\Movement\Garage Reference</div>
<div class="tx" style="left:1720px;top:963.30px;font-size:24px;transform:scaleX(0.91);transform-origin:0 0;">2/0/3</div>
<div class="tx" style="left:2121px;top:963.30px;font-size:24px;transform:scaleX(0.91);transform-origin:0 0;">DPTBoolean</div>
<div class="tx" style="left:2380px;top:963.30px;font-size:24px;transform:scaleX(0.91);transform-origin:0 0;">NEW</div>
<div class="row" style="top:998px;height:42px;background:#f29e9c"></div>
<div class="cb" style="top:1006px"></div>
<div class="tx" style="left:606px;top:1007.30px;font-size:24px;transform:scaleX(0.91);transform-origin:0 0;">Sun Protection\Status\Garage Current Position</div>
<div class="tx" style="left:1720px;top:1007.30px;font-size:24px;transform:scaleX(0.91);transform-origin:0 0;">2/1/0</div>
<div class="dd" style="top:998px"><div class="ddb"><svg width="16" height="10" viewBox="0 0 16 10"><path d="M1.5 1.5 L8 8 L14.5 1.5" stroke="#555" stroke-width="1.8" fill="none"/></svg></div></div>
<div class="tx" style="left:2122px;top:1007.30px;font-size:24px;transform:scaleX(0.91);transform-origin:0 0;">Undefined</div>
<div class="tx" style="left:2380px;top:1007.30px;font-size:24px;transform:scaleX(0.91);transform-origin:0 0;">NEW</div>
<div class="row" style="top:1042px;height:42px;background:#fff"></div>
<div class="cb" style="top:1050px"><svg width="22" height="22" viewBox="0 0 22 22"><path d="M2.5 10.5 L7.7 16 L19.5 4.3" stroke="#444" stroke-width="1.9" fill="none"/></svg></div>
<div class="tx" style="left:606px;top:1051.30px;font-size:24px;transform:scaleX(0.91);transform-origin:0 0;">Sun Protection\Status\Garage Status</div>
<div class="tx" style="left:1720px;top:1051.30px;font-size:24px;transform:scaleX(0.91);transform-origin:0 0;">2/1/1</div>
<div class="tx" style="left:2121px;top:1051.30px;font-size:24px;transform:scaleX(0.91);transform-origin:0 0;">DPTBoolean</div>
<div class="tx" style="left:2380px;top:1051.30px;font-size:24px;transform:scaleX(0.91);transform-origin:0 0;">NEW</div>
<div class="row" style="top:1086px;height:42px;background:#fff"></div>
<div class="cb" style="top:1094px"><svg width="22" height="22" viewBox="0 0 22 22"><path d="M2.5 10.5 L7.7 16 L19.5 4.3" stroke="#444" stroke-width="1.9" fill="none"/></svg></div>
<div class="tx" style="left:606px;top:1095.30px;font-size:24px;transform:scaleX(0.91);transform-origin:0 0;">Gate/Doors\Garage\Garage Door Open / Close</div>
<div class="tx" style="left:1720px;top:1095.30px;font-size:24px;transform:scaleX(0.91);transform-origin:0 0;">3/1/0</div>
<div class="tx" style="left:2121px;top:1095.30px;font-size:24px;transform:scaleX(0.91);transform-origin:0 0;">DPTBoolean</div>
<div class="tx" style="left:2380px;top:1095.30px;font-size:24px;transform:scaleX(0.91);transform-origin:0 0;">NEW</div>
<div class="row" style="top:1130px;height:42px;background:#fff"></div>
<div class="cb" style="top:1138px"><svg width="22" height="22" viewBox="0 0 22 22"><path d="M2.5 10.5 L7.7 16 L19.5 4.3" stroke="#444" stroke-width="1.9" fill="none"/></svg></div>
<div class="tx" style="left:606px;top:1139.30px;font-size:24px;transform:scaleX(0.91);transform-origin:0 0;">Gate/Doors\Garage\Garage Door Move To Sub Position 1/2 Open</div>
<div class="tx" style="left:1720px;top:1139.30px;font-size:24px;transform:scaleX(0.91);transform-origin:0 0;">3/1/1</div>
<div class="tx" style="left:2121px;top:1139.30px;font-size:24px;transform:scaleX(0.91);transform-origin:0 0;">DPTBoolean</div>
<div class="tx" style="left:2380px;top:1139.30px;font-size:24px;transform:scaleX(0.91);transform-origin:0 0;">NEW</div>
<div class="row" style="top:1174px;height:42px;background:#fff"></div>
<div class="cb" style="top:1182px"><svg width="22" height="22" viewBox="0 0 22 22"><path d="M2.5 10.5 L7.7 16 L19.5 4.3" stroke="#444" stroke-width="1.9" fill="none"/></svg></div>
<div class="tx" style="left:606px;top:1183.30px;font-size:24px;transform:scaleX(0.91);transform-origin:0 0;">Gate/Doors\Garage\Garage Door Switch On / Off Drive Lighting</div>
<div class="tx" style="left:1720px;top:1183.30px;font-size:24px;transform:scaleX(0.91);transform-origin:0 0;">3/1/2</div>
<div class="tx" style="left:2121px;top:1183.30px;font-size:24px;transform:scaleX(0.91);transform-origin:0 0;">DPTBoolean</div>
<div class="tx" style="left:2380px;top:1183.30px;font-size:24px;transform:scaleX(0.91);transform-origin:0 0;">NEW</div>
<div class="row" style="top:1218px;height:42px;background:#fff"></div>
<div class="cb" style="top:1226px"><svg width="22" height="22" viewBox="0 0 22 22"><path d="M2.5 10.5 L7.7 16 L19.5 4.3" stroke="#444" stroke-width="1.9" fill="none"/></svg></div>
<div class="tx" style="left:606px;top:1227.30px;font-size:24px;transform:scaleX(0.91);transform-origin:0 0;">Gate/Doors\Garage\Garage Door Approach &nbsp;Manual Ventilation Position</div>
<div class="tx" style="left:1720px;top:1227.30px;font-size:24px;transform:scaleX(0.91);transform-origin:0 0;">3/1/3</div>
<div class="tx" style="left:2121px;top:1227.30px;font-size:24px;transform:scaleX(0.91);transform-origin:0 0;">DPTBoolean</div>
<div class="tx" style="left:2380px;top:1227.30px;font-size:24px;transform:scaleX(0.91);transform-origin:0 0;">NEW</div>
<div class="row" style="top:1262px;height:42px;background:#fff"></div>
<div class="cb" style="top:1270px"><svg width="22" height="22" viewBox="0 0 22 22"><path d="M2.5 10.5 L7.7 16 L19.5 4.3" stroke="#444" stroke-width="1.9" fill="none"/></svg></div>
<div class="tx" style="left:606px;top:1271.30px;font-size:24px;transform:scaleX(0.91);transform-origin:0 0;">Gate/Doors\Garage\Garage Door Approach &nbsp;AutomaticVentilation Position</div>
<div class="tx" style="left:1720px;top:1271.30px;font-size:24px;transform:scaleX(0.91);transform-origin:0 0;">3/1/4</div>
<div class="tx" style="left:2121px;top:1271.30px;font-size:24px;transform:scaleX(0.91);transform-origin:0 0;">DPTBoolean</div>
<div class="tx" style="left:2380px;top:1271.30px;font-size:24px;transform:scaleX(0.91);transform-origin:0 0;">NEW</div>
<div class="row" style="top:1306px;height:42px;background:#fff"></div>
<div class="cb" style="top:1314px"><svg width="22" height="22" viewBox="0 0 22 22"><path d="M2.5 10.5 L7.7 16 L19.5 4.3" stroke="#444" stroke-width="1.9" fill="none"/></svg></div>
<div class="tx" style="left:606px;top:1315.30px;font-size:24px;transform:scaleX(0.91);transform-origin:0 0;">Gate/Doors\Status\Garage Door Open Status</div>
<div class="tx" style="left:1720px;top:1315.30px;font-size:24px;transform:scaleX(0.91);transform-origin:0 0;">3/2/0</div>
<div class="tx" style="left:2121px;top:1315.30px;font-size:24px;transform:scaleX(0.91);transform-origin:0 0;">DPTBoolean</div>
<div class="tx" style="left:2380px;top:1315.30px;font-size:24px;transform:scaleX(0.91);transform-origin:0 0;">NEW</div>
<div class="row" style="top:1350px;height:42px;background:#fff"></div>
<div class="cb" style="top:1358px"><svg width="22" height="22" viewBox="0 0 22 22"><path d="M2.5 10.5 L7.7 16 L19.5 4.3" stroke="#444" stroke-width="1.9" fill="none"/></svg></div>
<div class="tx" style="left:606px;top:1359.30px;font-size:24px;transform:scaleX(0.91);transform-origin:0 0;">Gate/Doors\Status\Garage Door Closed Status</div>
<div class="tx" style="left:1720px;top:1359.30px;font-size:24px;transform:scaleX(0.91);transform-origin:0 0;">3/2/1</div>
<div class="tx" style="left:2121px;top:1359.30px;font-size:24px;transform:scaleX(0.91);transform-origin:0 0;">DPTBoolean</div>
<div class="tx" style="left:2380px;top:1359.30px;font-size:24px;transform:scaleX(0.91);transform-origin:0 0;">NEW</div>
<div class="row" style="top:1394px;height:42px;background:#f29e9c"></div>
<div class="cb" style="top:1402px"></div>
<div class="tx" style="left:606px;top:1403.30px;font-size:24px;transform:scaleX(0.91);transform-origin:0 0;">Gate/Doors\Status\Garage Door Position Status</div>
<div class="tx" style="left:1720px;top:1403.30px;font-size:24px;transform:scaleX(0.91);transform-origin:0 0;">3/2/2</div>
<div class="dd" style="top:1394px"><div class="ddb"><svg width="16" height="10" viewBox="0 0 16 10"><path d="M1.5 1.5 L8 8 L14.5 1.5" stroke="#555" stroke-width="1.8" fill="none"/></svg></div></div>
<div class="tx" style="left:2122px;top:1403.30px;font-size:24px;transform:scaleX(0.91);transform-origin:0 0;">Undefined</div>
<div class="tx" style="left:2380px;top:1403.30px;font-size:24px;transform:scaleX(0.91);transform-origin:0 0;">NEW</div>
<div class="hsep" style="top:424px"></div>
<div class="hsep" style="top:468px"></div>
<div class="hsep" style="top:512px"></div>
<div class="hsep" style="top:556px"></div>
<div class="hsep" style="top:600px"></div>
<div class="hsep" style="top:644px"></div>
<div class="hsep" style="top:688px"></div>
<div class="hsep" style="top:732px"></div>
<div class="hsep" style="top:776px"></div>
<div class="hsep" style="top:820px"></div>
<div class="hsep" style="top:864px"></div>
<div class="hsep" style="top:908px"></div>
<div class="hsep" style="top:952px"></div>
<div class="hsep" style="top:996px"></div>
<div class="hsep" style="top:1040px"></div>
<div class="hsep" style="top:1084px"></div>
<div class="hsep" style="top:1128px"></div>
<div class="hsep" style="top:1172px"></div>
<div class="hsep" style="top:1216px"></div>
<div class="hsep" style="top:1260px"></div>
<div class="hsep" style="top:1304px"></div>
<div class="hsep" style="top:1348px"></div>
<div class="hsep" style="top:1392px"></div>
<div class="vsep" style="left:598px"></div>
<div class="vsep" style="left:1712px"></div>
<div class="vsep" style="left:1912px"></div>
<div class="vsep" style="left:2112px"></div>
<div class="vsep" style="left:2372px"></div>
<div id="tblborder"></div>
<div id="scroll"></div>
<div id="thumb"></div>
<svg class="a" style="left:2582px;top:332px" width="22" height="16" viewBox="0 0 22 16"><path d="M4 12 L11 5 L18 12" fill="none" stroke="#606060" stroke-width="3"/></svg>
<svg class="a" style="left:2582px;top:1412px" width="22" height="16" viewBox="0 0 22 16"><path d="M4 4 L11 11 L18 4" fill="none" stroke="#606060" stroke-width="3"/></svg>
<div id="selall"></div>
<div class="tx" style="left:541px;top:1465.60px;font-size:24px;transform:scaleX(0.93);transform-origin:0 0;">Select All</div>
<div id="next"></div>
<div class="tx" style="left:2513px;top:1479.60px;font-size:24px;transform:scaleX(0.93);transform-origin:0 0;">Next</div>
<svg class="a" style="left:2608px;top:1526px" width="20" height="20" viewBox="0 0 20 20"><g fill="#c2c2c2"><rect x="14" y="2" width="4" height="4"/><rect x="8" y="8" width="4" height="4"/><rect x="14" y="8" width="4" height="4"/><rect x="2" y="14" width="4" height="4"/><rect x="8" y="14" width="4" height="4"/><rect x="14" y="14" width="4" height="4"/></g></svg>

</body></html>
